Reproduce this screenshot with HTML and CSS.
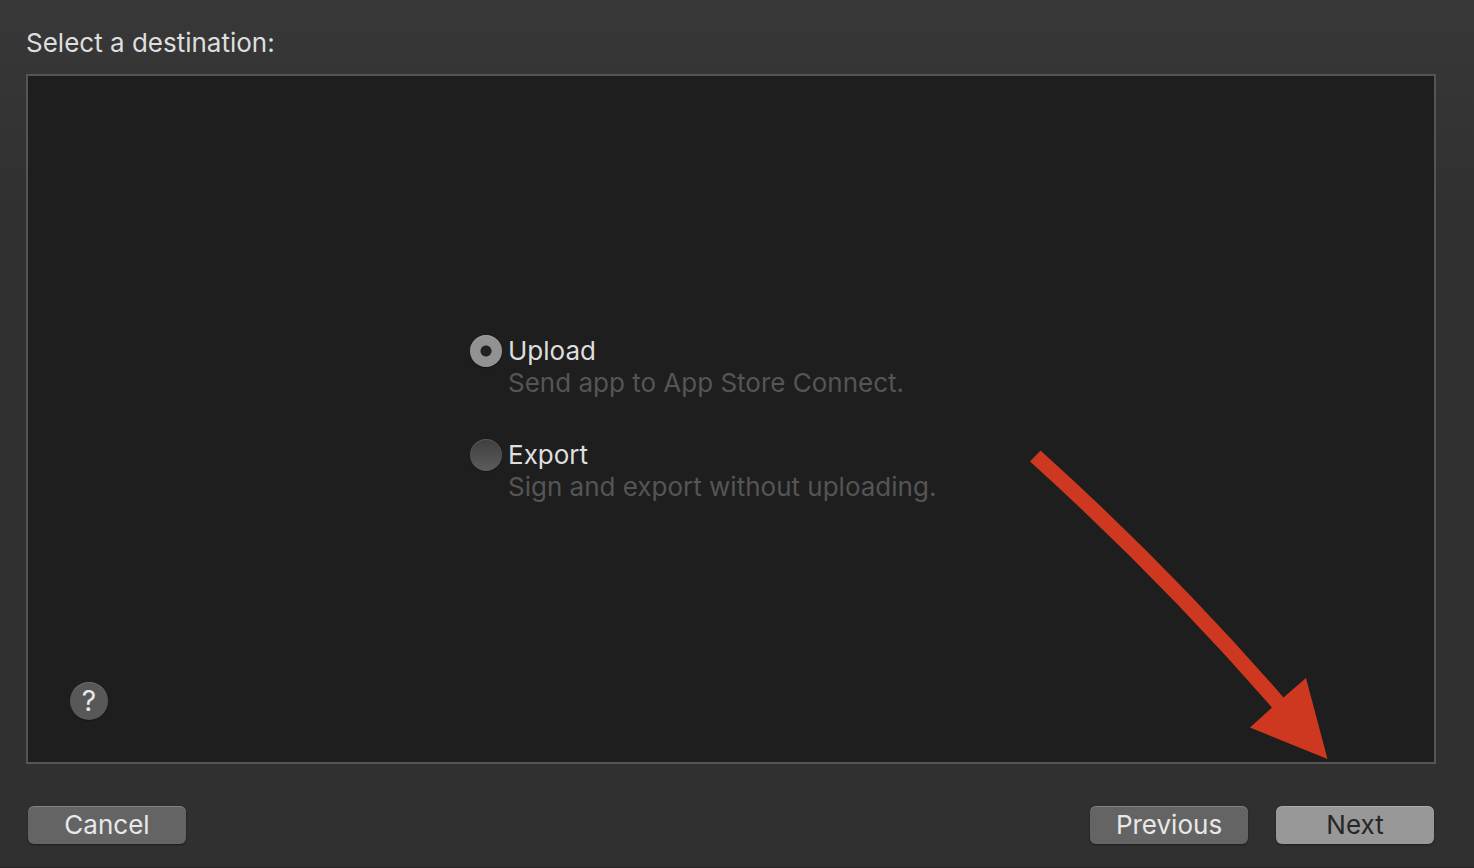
FILE: index.html
```
<!DOCTYPE html>
<html lang="en">
<head>
<meta charset="utf-8">
<meta name="viewport" content="width=device-width, initial-scale=1">
<title>Select a destination</title>
<link rel="stylesheet" href="styles.css">
</head>
<body>
<form class="sheet">
  <h1 class="title" id="title">Select a destination:</h1>
  <main class="panel">
    <div class="options" role="radiogroup" aria-labelledby="title">
      <div class="option">
        <label class="choice" for="upload"><input class="radio" type="radio" id="upload" name="destination" aria-describedby="upload-note" checked>Upload</label>
        <p class="note" id="upload-note">Send app to App Store Connect.</p>
      </div>
      <div class="option">
        <label class="choice" for="export"><input class="radio" type="radio" id="export" name="destination" aria-describedby="export-note">Export</label>
        <p class="note" id="export-note">Sign and export without uploading.</p>
      </div>
    </div>
    <button class="help" type="button" aria-label="Help">?</button>
    <svg class="arrow" width="300" height="312" viewBox="0 0 300 312" aria-hidden="true">
      <path d="M11.500 2.500Q142 120 254.500 249.500L277 230L298.500 311L221 279.500L243 259.500Q130 130 1 13.500Z"/>
    </svg>
  </main>
  <footer class="actions">
    <button class="button" type="button">Cancel</button>
    <div class="group">
      <button class="button" type="button">Previous</button>
      <button class="button primary" type="submit">Next</button>
    </div>
  </footer>
</form>
</body>
</html>
```
FILE: styles.css
```
* {
  box-sizing: border-box;
}

body {
  margin: 0;
  background: linear-gradient(#383838, #303030 25%, #303030);
  color: #dedede;
  font: 26px/32px Inter, "Liberation Sans", sans-serif;
}

.sheet {
  display: flex;
  flex-direction: column;
  min-height: 100vh;
  padding: 27px 38px 23px 26px;
  border-bottom: 1px solid #282627;
}

.title {
  margin: 0 0 15px;
  font: inherit;
}

.panel {
  position: relative;
  display: flex;
  flex: 1;
  align-items: center;
  justify-content: center;
  border: 2px solid #555;
  background: #1e1e1e;
}

.options {
  display: grid;
  gap: 40px;
  width: 522px;
}

.choice {
  display: flex;
  align-items: center;
  gap: 6px;
  width: max-content;
}

.radio {
  appearance: none;
  width: 32px;
  height: 32px;
  margin: 0;
  border-radius: 50%;
  background: linear-gradient(#3e3e3e, #5c5c5c);
  box-shadow: inset 0 1px #ffffff22, 0 1px 1px #00000055;
}

.radio:checked {
  background: radial-gradient(circle, #222 5px, #929292 6px);
}

.note {
  margin: 0 0 0 38px;
  color: #555;
}

.help {
  position: absolute;
  bottom: 42px;
  left: 42px;
  width: 38px;
  height: 38px;
  padding: 0;
  border: 0;
  border-radius: 50%;
  background: #585858;
  box-shadow: inset 0 1px #ffffff22, 0 1px 1px #00000055;
  color: #e8e8e8;
  font: inherit;
  font-size: 28px;
}

.arrow {
  position: absolute;
  right: 105px;
  bottom: 2px;
  fill: #cf3820;
  pointer-events: none;
}

.actions {
  display: flex;
  justify-content: space-between;
  margin-top: 42px;
  padding: 0 2px;
}

.group {
  display: flex;
  gap: 28px;
}

.button {
  width: 158px;
  height: 38px;
  padding: 0;
  border: 0;
  border-radius: 6px;
  background: #646464;
  box-shadow: inset 0 1px #ffffff33, 0 1px 2px #00000066;
  color: #e8e8e8;
  font: inherit;
}

.primary {
  background: #989898;
  color: #272727;
}
```
